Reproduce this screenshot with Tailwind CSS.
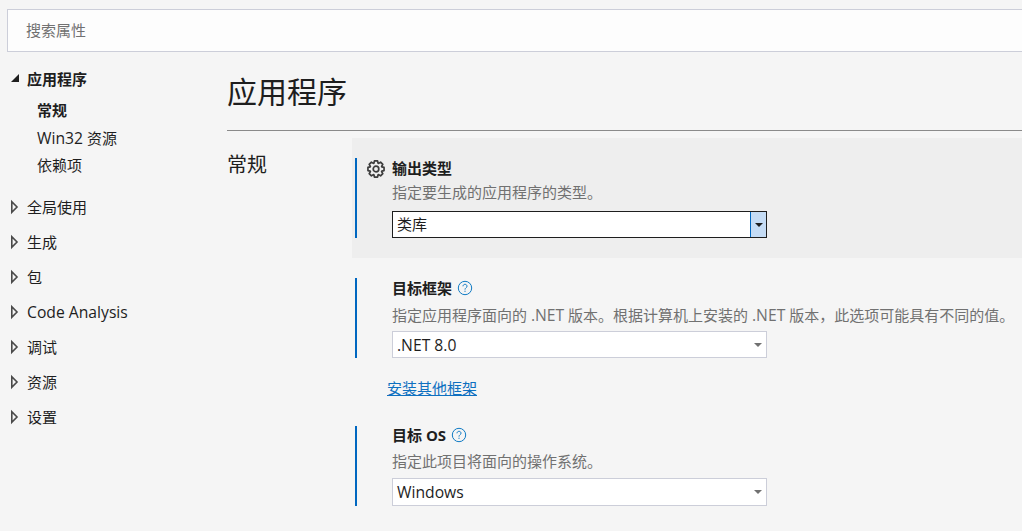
<!DOCTYPE html>
<html lang="zh-CN">
<head>
    <meta charset="UTF-8">
    <title>应用程序</title>
    <script src="https://cdn.jsdelivr.net/npm/@tailwindcss/browser@4"></script>
</head>
<body class="bg-[#f5f5f5] font-['Open_Sans','Noto_Sans_CJK_SC',sans-serif] text-[15px] text-[#1e1e1e] overflow-hidden">
<div class="w-[1022px] h-[531px] overflow-hidden pt-[9px] pl-[7px]">
    <div class="h-[43px] border border-[#ccced9] border-r-0 bg-[#fdfdfd] flex items-center pl-[18px] text-[#717171]">搜索属性</div>

    <div class="flex mt-[17px]">
        <!-- left nav -->
        <nav class="w-[220px] shrink-0 leading-[20px]">
            <div class="flex items-center h-[20px] font-bold">
                <svg class="w-[20px] h-[20px] shrink-0" viewBox="0 0 20 20"><path d="M4 13H12V5Z" fill="#1e1e1e" /></svg>
                <span>应用程序</span>
            </div>
            <div class="pl-[30px] mt-[11px] flex flex-col gap-[7.5px]">
                <div class="font-bold">常规</div>
                <div><span class="text-[15.7px]">Win32</span> 资源</div>
                <div>依赖项</div>
            </div>
            <div class="flex flex-col gap-[15px] mt-[22px]">
                <div class="flex items-center h-[20px]"><svg class="w-[20px] h-[20px] shrink-0" viewBox="0 0 20 20"><path d="M4.8 4.8V15.2L10 10Z" fill="none" stroke="#4a4a4a" stroke-width="1.6" /></svg><span>全局使用</span></div>
                <div class="flex items-center h-[20px]"><svg class="w-[20px] h-[20px] shrink-0" viewBox="0 0 20 20"><path d="M4.8 4.8V15.2L10 10Z" fill="none" stroke="#4a4a4a" stroke-width="1.6" /></svg><span>生成</span></div>
                <div class="flex items-center h-[20px]"><svg class="w-[20px] h-[20px] shrink-0" viewBox="0 0 20 20"><path d="M4.8 4.8V15.2L10 10Z" fill="none" stroke="#4a4a4a" stroke-width="1.6" /></svg><span>包</span></div>
                <div class="flex items-center h-[20px]"><svg class="w-[20px] h-[20px] shrink-0" viewBox="0 0 20 20"><path d="M4.8 4.8V15.2L10 10Z" fill="none" stroke="#4a4a4a" stroke-width="1.6" /></svg><span class="text-[15.7px]">Code Analysis</span></div>
                <div class="flex items-center h-[20px]"><svg class="w-[20px] h-[20px] shrink-0" viewBox="0 0 20 20"><path d="M4.8 4.8V15.2L10 10Z" fill="none" stroke="#4a4a4a" stroke-width="1.6" /></svg><span>调试</span></div>
                <div class="flex items-center h-[20px]"><svg class="w-[20px] h-[20px] shrink-0" viewBox="0 0 20 20"><path d="M4.8 4.8V15.2L10 10Z" fill="none" stroke="#4a4a4a" stroke-width="1.6" /></svg><span>资源</span></div>
                <div class="flex items-center h-[20px]"><svg class="w-[20px] h-[20px] shrink-0" viewBox="0 0 20 20"><path d="M4.8 4.8V15.2L10 10Z" fill="none" stroke="#4a4a4a" stroke-width="1.6" /></svg><span>设置</span></div>
            </div>
        </nav>

        <!-- main -->
        <main class="flex-1 min-w-0">
            <h1 class="text-[30px] leading-[44px] mt-[1px] pb-[16px] border-b border-[#8a8a8a] h-[61px]">应用程序</h1>
            <div class="flex mt-[7px]">
                <div class="w-[125px] shrink-0 text-[20px] leading-[28px] pt-[13px]">常规</div>
                <div class="flex-1 min-w-0">
                    <section class="bg-[#eeeeee] h-[120px] pt-[20px] pl-[3px]">
                        <div class="border-l-2 border-[#0067c0] h-[80px] pl-[35px]">
                            <div class="flex items-center h-[20px] font-bold relative">
                                <svg class="absolute left-[-25px] top-[2px] w-[18px] h-[18px]" viewBox="0 0 18 18" fill="none" stroke="#3c3c3c" stroke-width="1.7" stroke-linejoin="round"><path d="M6.88 3.17L7.44 .95H10.56L11.12 3.17L11.62 3.38L13.58 2.2L15.8 4.42L14.62 6.38L14.83 6.88L17.05 7.44V10.56L14.83 11.12L14.62 11.62L15.8 13.58L13.58 15.8L11.62 14.62L11.12 14.83L10.56 17.05H7.44L6.88 14.83L6.38 14.62L4.42 15.8L2.2 13.58L3.38 11.62L3.17 11.12L.95 10.56V7.44L3.17 6.88L3.38 6.38L2.2 4.42L4.42 2.2L6.38 3.38Z" /><circle cx="9" cy="9" r="2.8" /></svg>
                                输出类型
                            </div>
                            <div class="text-[#717171] mt-[3px] leading-[22px]">指定要生成的应用程序的类型。</div>
                            <div class="mt-[8px] w-[375px] h-[27px] bg-white border border-[#1e1e1e] flex items-center pl-[4px]">
                                <span class="flex-1">类库</span>
                                <span class="w-[16px] h-full bg-[#c5dcf5] border-l border-[#0067c0] flex items-center justify-center"><span class="w-0 h-0 border-x-[4px] border-x-transparent border-t-[4px] border-t-[#1e1e1e]"></span></span>
                            </div>
                        </div>
                    </section>

                    <section class="mt-[20px] ml-[3px] border-l-2 border-[#0067c0] h-[80px] pl-[35px]">
                        <div class="flex items-center h-[20px] font-bold gap-[5px]">目标框架
                            <svg class="w-[16px] h-[16px]" viewBox="0 0 16 16" fill="none" stroke="#0e7ac4"><circle cx="8" cy="8" r="6.7" /><path d="M6 6.3c0-1.2.9-2 2-2s2 .8 2 1.9c0 1.6-2 1.6-2 3.4" /><path d="M8 10.7v1.2" /></svg>
                        </div>
                        <div class="text-[#717171] mt-[6px] leading-[22px] whitespace-nowrap">指定应用程序面向的 <span class="text-[15.7px]">.NET</span> 版本。根据计算机上安装的 <span class="text-[15.7px]">.NET</span> 版本，此选项可能具有不同的值。</div>
                        <div class="mt-[5px] w-[375px] h-[27px] bg-white border border-[#ccced9] flex items-center pl-[4px]">
                            <span class="flex-1 text-[15.7px] pt-[3px]">.NET 8.0</span>
                            <span class="w-[16px] flex justify-center"><span class="w-0 h-0 border-x-[4px] border-x-transparent border-t-[4px] border-t-[#717171]"></span></span>
                        </div>
                    </section>

                    <a class="block ml-[35px] mt-[19px] leading-[22px] text-[#0e70c0] underline">安装其他框架</a>

                    <section class="mt-[27px] ml-[3px] border-l-2 border-[#0067c0] h-[80px] pl-[35px]">
                        <div class="flex items-center h-[18px] font-bold gap-[5px]">目标 OS
                            <svg class="w-[16px] h-[16px]" viewBox="0 0 16 16" fill="none" stroke="#0e7ac4"><circle cx="8" cy="8" r="6.7" /><path d="M6 6.3c0-1.2.9-2 2-2s2 .8 2 1.9c0 1.6-2 1.6-2 3.4" /><path d="M8 10.7v1.2" /></svg>
                        </div>
                        <div class="text-[#717171] mt-[6px] leading-[22px]">指定此项目将面向的操作系统。</div>
                        <div class="mt-[6px] w-[375px] h-[28px] bg-white border border-[#ccced9] flex items-center pl-[4px]">
                            <span class="flex-1 text-[15.7px] pt-[2px]">Windows</span>
                            <span class="w-[16px] flex justify-center"><span class="w-0 h-0 border-x-[4px] border-x-transparent border-t-[4px] border-t-[#717171]"></span></span>
                        </div>
                    </section>
                </div>
            </div>
        </main>
    </div>
</div>
</body>
</html>
